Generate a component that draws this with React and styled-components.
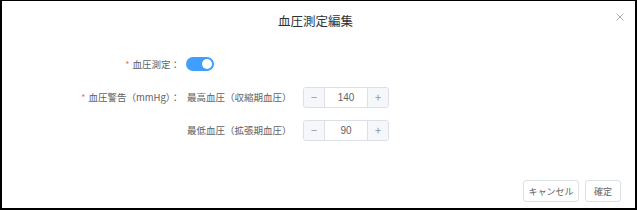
import React from "react";
import styled, { createGlobalStyle } from "styled-components";

const Global = createGlobalStyle`
  html, body { margin: 0; padding: 0; background: #fff; }
  body { font-family: "Noto Sans CJK JP", "Noto Sans", sans-serif; }
  * { box-sizing: border-box; }
`;

const Dialog = styled.div`
  width: 637px;
  height: 210px;
  border: 2px solid #000;
  border-top-width: 1px;
  background: #fff;
  display: flex;
  flex-direction: column;
  position: relative;
`;

const Header = styled.div`
  height: 40px;
  display: flex;
  align-items: center;
  justify-content: center;
  font-size: 12.5px;
  color: #303133;
  padding: 0 6px 2px 0;
`;

const Close = styled.button`
  position: absolute;
  top: 11px;
  right: 10px;
  width: 10px;
  height: 10px;
  padding: 0;
  border: none;
  background: transparent;
  display: flex;
  align-items: center;
  justify-content: center;
`;

const Form = styled.div`
  margin-top: 12px;
  display: grid;
  grid-template-columns: 185px 116px 86px;
  grid-auto-rows: 22px;
  row-gap: 11px;
  align-items: center;
`;

const Label = styled.div`
  grid-column: 1;
  text-align: right;
  padding-right: 7px;
  font-size: 9.5px;
  color: #606266;
  white-space: nowrap;
`;

const Star = styled.span`
  color: #f56c6c;
  font-size: 9px;
  margin-right: 3px;
`;

const SubLabel = styled.div`
  grid-column: 2;
  font-size: 9.5px;
  color: #606266;
  white-space: nowrap;
`;

const Switch = styled.div`
  grid-column: 2;
  width: 28px;
  height: 14px;
  border-radius: 7px;
  background: #409eff;
  position: relative;
  margin-left: -1px;
  &::after {
    content: "";
    position: absolute;
    top: 2px;
    right: 2px;
    width: 10px;
    height: 10px;
    border-radius: 50%;
    background: #fff;
  }
`;

const Number = styled.div`
  grid-column: 3;
  height: 21px;
  border: 1px solid #dcdfe6;
  border-radius: 3px;
  display: flex;
  overflow: hidden;
`;

const Step = styled.div`
  width: 21px;
  background: #f5f7fa;
  color: #909399;
  font-size: 11px;
  display: flex;
  align-items: center;
  justify-content: center;
  border-${(p) => (p.$side === "left" ? "right" : "left")}: 1px solid #dcdfe6;
`;

const Value = styled.div`
  flex: 1;
  display: flex;
  align-items: center;
  justify-content: center;
  font-size: 10px;
  color: #606266;
  font-family: "Liberation Sans", "Noto Sans", sans-serif;
`;

const Footer = styled.div`
  margin-top: auto;
  display: flex;
  justify-content: flex-end;
  gap: 6px;
  padding: 0 14px 6px 0;
`;

const Button = styled.button`
  height: 22px;
  width: ${(p) => p.$w}px;
  padding: 0;
  border: 1px solid #dcdfe6;
  border-radius: 3px;
  background: #fff;
  color: #606266;
  font-family: "Noto Sans CJK JP", sans-serif;
  font-size: 9px;
`;

const NumberInput = ({ value }) => (
  <Number>
    <Step $side="left">−</Step>
    <Value>{value}</Value>
    <Step $side="right">+</Step>
  </Number>
);

export default function App() {
  return (
    <>
      <Global />
      <Dialog>
        <Header>血圧測定編集</Header>
        <Close aria-label="close">
          <svg width="8" height="8" viewBox="0 0 8 8">
            <path d="M0.5 0.5 L7.5 7.5 M7.5 0.5 L0.5 7.5" stroke="#a8abb2" strokeWidth="1" />
          </svg>
        </Close>
        <Form>
          <Label><Star>*</Star>血圧測定：</Label>
          <Switch />
          <div />
          <Label><Star>*</Star>血圧警告（mmHg）：</Label>
          <SubLabel>最高血圧（収縮期血圧）</SubLabel>
          <NumberInput value="140" />
          <Label />
          <SubLabel>最低血圧（拡張期血圧）</SubLabel>
          <NumberInput value="90" />
        </Form>
        <Footer>
          <Button $w={56}>キャンセル</Button>
          <Button $w={36}>確定</Button>
        </Footer>
      </Dialog>
    </>
  );
}
